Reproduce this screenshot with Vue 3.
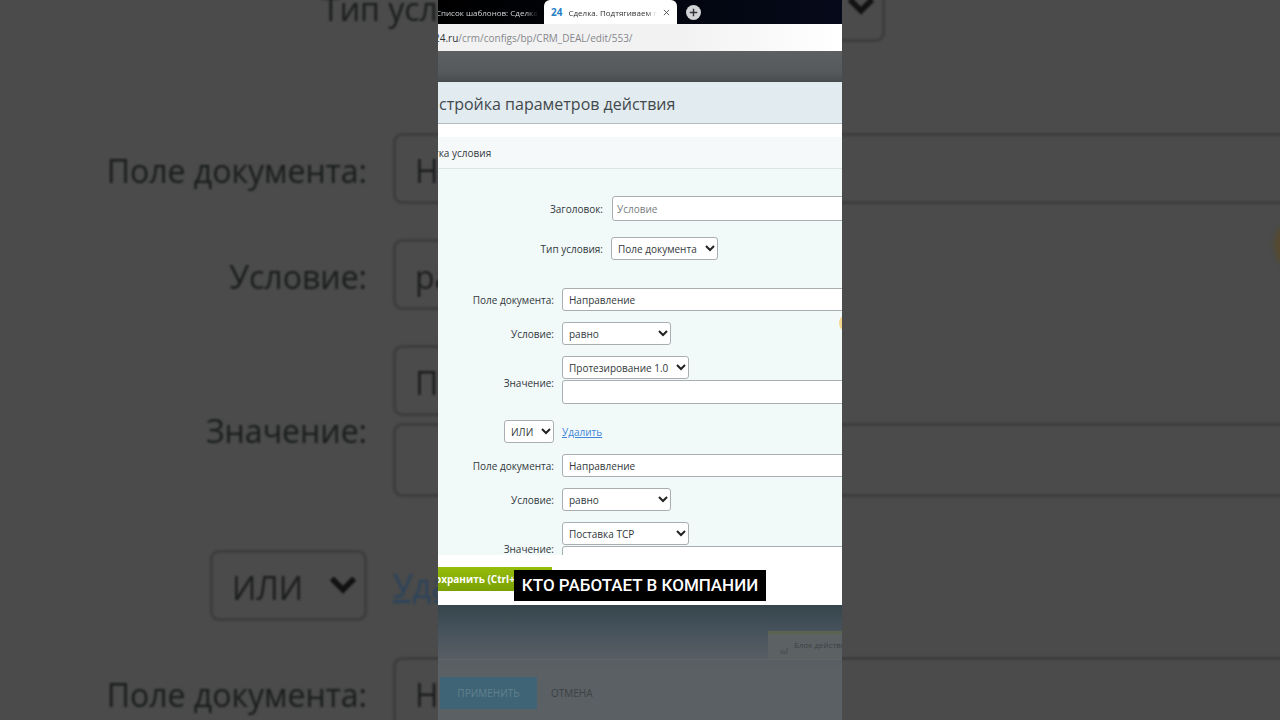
<script setup>
import { ref } from 'vue'

const title = ref('Условие')
const kind = ref('Поле документа')

const makeGroups = () => [
  { field: 'Направление', operator: 'равно', value: 'Протезирование 1.0', text: '', join: 'ИЛИ' },
  { field: 'Направление', operator: 'равно', value: 'Поставка TCP', text: '', join: '' }
]

const layers = ref([
  { id: 'back', groups: makeGroups() },
  { id: 'front', groups: makeGroups() }
])
</script>

<template>
  <div class="stage">
    <section
      v-for="layer in layers"
      :key="layer.id"
      :class="['layer', layer.id]"
      :inert="layer.id === 'back'"
    >
      <template v-if="layer.id === 'front'">
        <nav class="tabs">
          <a class="tab" href="#list">Список шаблонов: Сделка</a>
          <div class="tab active">
            <b>24</b>
            <a href="#deal">Сделка. Подтягиваем п</a>
            <button class="close" type="button" aria-label="Закрыть вкладку">
              <svg viewBox="0 0 8 8"><path d="M1 1l6 6M7 1L1 7" /></svg>
            </button>
          </div>
          <button class="add" type="button" aria-label="Новая вкладка">
            <svg viewBox="0 0 16 16"><circle cx="8" cy="8" r="8" /><path d="M8 4v8M4 8h8" /></svg>
          </button>
        </nav>
        <div class="address"><span><b>24.ru</b>/crm/configs/bp/CRM_DEAL/edit/553/</span></div>
        <div class="shade"></div>
        <header class="heading"><h1>стройка параметров действия</h1></header>
        <div class="section"><h2>тка условия</h2></div>
      </template>

      <form class="form" @submit.prevent>
        <div v-if="layer.id === 'front'" class="row top title-row">
          <label for="title">Заголовок:</label>
          <input id="title" v-model="title" class="box wide" type="text" />
        </div>
        <div class="row top kind-row">
          <label :for="layer.id + '-kind'">Тип условия:</label>
          <span class="pick kind">
            <select :id="layer.id + '-kind'" v-model="kind" class="box"><option>Поле документа</option></select>
            <svg viewBox="0 0 10 7"><path d="M1 1l4 4 4-4" /></svg>
          </span>
        </div>

        <div v-for="(g, i) in layer.groups" :key="i" class="group">
          <div class="row">
            <label :for="layer.id + '-field-' + i">Поле документа:</label>
            <select :id="layer.id + '-field-' + i" v-model="g.field" class="box wide"><option>{{ g.field }}</option></select>
          </div>
          <div class="row">
            <label :for="layer.id + '-op-' + i">Условие:</label>
            <span class="pick op">
              <select :id="layer.id + '-op-' + i" v-model="g.operator" class="box"><option>{{ g.operator }}</option></select>
              <svg viewBox="0 0 10 7"><path d="M1 1l4 4 4-4" /></svg>
            </span>
          </div>
          <div class="row">
            <label class="mid" :for="layer.id + '-value-' + i">Значение:</label>
            <div class="stack">
              <span class="pick value">
                <select :id="layer.id + '-value-' + i" v-model="g.value" class="box"><option>{{ g.value }}</option></select>
                <svg viewBox="0 0 10 7"><path d="M1 1l4 4 4-4" /></svg>
              </span>
              <input v-model="g.text" class="box wide tall" type="text" aria-label="Значение" />
            </div>
          </div>
          <div v-if="g.join" class="row join-row">
            <span class="pick join">
              <select v-model="g.join" class="box" aria-label="Связь условий"><option>{{ g.join }}</option></select>
              <svg viewBox="0 0 10 7"><path d="M1 1l4 4 4-4" /></svg>
            </span>
            <a class="remove" href="#remove">Удалить</a>
          </div>
        </div>
      </form>
      <i class="marker"></i>

      <template v-if="layer.id === 'front'">
        <footer class="actions"><button class="save" type="button">охранить (Ctrl+Enter)</button></footer>
        <div class="under">
          <div class="blocks">
            <svg viewBox="0 0 8 8"><path d="M1 4v3h6V2M3 5h2" /></svg>
            <span>Блок действий</span>
          </div>
          <div class="bottom">
            <button class="apply" type="button">ПРИМЕНИТЬ</button>
            <button class="cancel" type="button">ОТМЕНА</button>
          </div>
        </div>
      </template>
    </section>
    <div class="caption"><p>КТО РАБОТАЕТ В КОМПАНИИ</p></div>
  </div>
</template>

<style>
body {
  background: #4a4b4a;
  overflow: hidden;
}
</style>

<style scoped>
.stage {
  position: relative;
  display: grid;
  grid-template-columns: 1fr minmax(404px, 31.5%) 1fr;
  height: 100vh;
  overflow: hidden;
  font-family: "Open Sans", "Noto Sans", sans-serif;
}
.stage * {
  box-sizing: border-box;
}
.layer {
  position: relative;
  grid-row: 1;
  overflow: hidden;
  display: flex;
  flex-direction: column;
}
.front {
  grid-column: 2;
  --ctl: 23px;
  --tall: 24px;
  --gap: 11px;
  --stack: 1px;
  --label: 116px;
  --top-label: 165px;
  --space: 8px;
  --font: 10px;
  --drop: 1px;
  --line: 1px;
  --radius: 3px;
  --pad: 6px;
  --edge: #a9afb1;
  --fill: #ffffff;
  --ink: #33383b;
  --link: #3f86d8;
  --arrow: 10px;
  --arrow-right: 3px;
  --mark: #222222;
  background: #f1f9f9;
}
.back {
  grid-column: 1 / -1;
  --ctl: 71px;
  --tall: 74px;
  --gap: 35px;
  --stack: 7px;
  --label: 367px;
  --top-label: 522px;
  --space: 26px;
  --font: 32px;
  --drop: 4px;
  --line: 3px;
  --radius: 9px;
  --pad: 19px;
  --edge: #3c3d3c;
  --fill: #4c4b4b;
  --ink: #1a1c1d;
  --link: #2c435c;
  --arrow: 28px;
  --arrow-right: 10px;
  --mark: #111111;
  background: #4a4b4a;
}
.back .form {
  filter: blur(1px);
  margin-top: -29px;
}
.form {
  flex: 1;
  min-height: 0;
  overflow: hidden;
  font-size: var(--font);
  color: var(--ink);
}
.back .form {
  overflow: visible;
}
.front .form {
  padding-top: 27px;
}
.row {
  display: grid;
  grid-template-columns: var(--label) 1fr;
  column-gap: var(--space);
  align-items: center;
  margin-bottom: var(--gap);
}
.row.top {
  grid-template-columns: var(--top-label) 1fr;
}
.title-row {
  margin-bottom: 16px;
}
.title-row .box {
  height: 25px;
  padding-left: 4px;
  margin-left: 1px;
  color: #777c7f;
}
.front .kind-row {
  margin-bottom: 28px;
}
.back .kind-row {
  margin-bottom: 91px;
}
label {
  padding-top: var(--drop);
  text-align: right;
  white-space: nowrap;
}
.mid {
  padding-top: var(--pad);
}
.box {
  display: block;
  width: 100%;
  height: var(--ctl);
  margin: 0;
  padding: var(--line) 0 0 var(--pad);
  appearance: none;
  border: var(--line) solid var(--edge);
  border-radius: var(--radius);
  background: var(--fill);
  color: var(--ink);
  font: inherit;
  outline: none;
}
.wide {
  width: calc(100% + 12px);
}
.tall {
  height: var(--tall);
}
.stack {
  display: grid;
  row-gap: var(--stack);
}
.pick {
  position: relative;
  display: block;
}
.pick svg {
  position: absolute;
  right: var(--arrow-right);
  top: 0;
  width: var(--arrow);
  height: 100%;
  fill: none;
  stroke: var(--mark);
  stroke-width: 2;
  pointer-events: none;
}
.front .kind { width: 107px; }
.front .op { width: 109px; }
.front .value { width: 127px; }
.front .join { width: 50px; }
.back .kind { width: 337px; }
.back .op { width: 344px; }
.back .value { width: 400px; }
.back .join { width: 157px; }
.join {
  justify-self: end;
}
.front .join-row {
  margin: 16px 0 11px;
}
.back .join-row {
  margin: 53px 0 36px;
}
.remove {
  justify-self: start;
  color: var(--link);
  text-decoration: underline;
}
.marker {
  position: absolute;
  border-radius: 50%;
}
.front .marker {
  right: -11px;
  top: 315px;
  width: 14px;
  height: 16px;
  background: #f5d78e;
}
.back .marker {
  right: -36px;
  top: 220px;
  width: 42px;
  height: 50px;
  background: #554a30;
  filter: blur(2px);
}

.tabs {
  flex: none;
  display: flex;
  height: 24px;
  background: linear-gradient(90deg, #000000, #050a1a);
  font-size: 8px;
}
.tab {
  width: 106px;
  display: flex;
  align-items: center;
  overflow: hidden;
  white-space: nowrap;
  color: #d4d6da;
  text-decoration: none;
}
.tabs > a.tab {
  width: 102px;
  margin: 0 6px 0 -2px;
  mask-image: linear-gradient(90deg, #000000 88%, transparent);
}
.tab.active {
  width: 133px;
  padding: 0 7px;
  gap: 6px;
  border-radius: 6px 6px 0 0;
  background: #ffffff;
}
.active b {
  color: #2a7fc4;
  font-size: 10px;
}
.active a {
  flex: 1;
  overflow: hidden;
  color: #2f3235;
  text-decoration: none;
  mask-image: linear-gradient(90deg, #000000 88%, transparent);
}
button {
  border: 0;
  padding: 0;
  font: inherit;
}
.close,
.add {
  display: flex;
  align-items: center;
  background: none;
}
.close svg {
  width: 7px;
  height: 7px;
  fill: none;
  stroke: #44484b;
}
.add {
  margin-left: 9px;
}
.add svg {
  width: 15px;
  height: 15px;
  fill: #d3d4d6;
}
.add path {
  stroke: #303336;
  stroke-width: 1.5;
}
.address {
  flex: none;
  display: flex;
  align-items: center;
  height: 27px;
  background: linear-gradient(90deg, #f2f2f3 60%, #ffffff);
  color: #85888b;
  font-size: 10px;
}
.address span {
  margin-left: -4px;
  white-space: nowrap;
}
.address b {
  font-weight: 400;
  color: #2f3234;
}
.shade {
  flex: none;
  height: 31px;
  background: linear-gradient(#5c6063, #55595c 70%, #474b4e);
}
.heading {
  flex: none;
  display: flex;
  align-items: center;
  height: 42px;
  padding-top: 2px;
  border-bottom: 1px solid #b3bdc3;
  background: #e2ebef;
}
h1,
h2 {
  margin: 0;
  font-weight: 400;
  white-space: nowrap;
}
h1 {
  padding-left: 1px;
  font-size: 16px;
  color: #43494d;
}
.section {
  flex: none;
  display: flex;
  align-items: center;
  height: 45px;
  border-top: 13px solid #ffffff;
  border-bottom: 1px solid #dbe3e4;
  background: #f6f9fa;
}
h2 {
  margin-left: -4px;
  font-size: 10px;
  color: #34383a;
}
.actions {
  flex: none;
  height: 50px;
  padding-top: 12px;
  background: #ffffff;
}
.save {
  display: block;
  width: 114px;
  height: 24px;
  overflow: hidden;
  background: linear-gradient(#95bd0a, #7ba004);
  color: #ffffff;
  font-size: 10px;
  font-weight: 700;
  text-align: left;
  text-indent: -3px;
  white-space: nowrap;
}
.under {
  flex: none;
  height: 115px;
  display: flex;
  flex-direction: column;
  background: linear-gradient(#36444c, #46535c 22%, #555b62 42%, #5b6064 55%);
}
.blocks {
  align-self: flex-end;
  display: flex;
  align-items: center;
  gap: 6px;
  width: 74px;
  height: 28px;
  margin-top: 26px;
  padding: 0 0 5px 12px;
  overflow: hidden;
  border-top: 3px solid #5b6350;
  background: #5c6164;
  color: #3d4245;
  font-size: 8px;
  white-space: nowrap;
}
.blocks svg {
  flex: none;
  align-self: flex-end;
  width: 8px;
  height: 8px;
  fill: none;
  stroke: #454a4d;
}
.bottom {
  flex: 1;
  display: flex;
  align-items: flex-start;
  gap: 14px;
  padding: 17px 2px 0;
  border-top: 1px solid #616568;
}
.apply,
.cancel {
  height: 32px;
  font-size: 10px;
}
.apply {
  width: 97px;
  background: #3e6475;
  color: #62808d;
}
.cancel {
  background: none;
  color: #3d4245;
}
.caption {
  position: absolute;
  left: 0;
  right: 0;
  bottom: 119px;
  display: flex;
  justify-content: center;
}
.caption p {
  margin: 0;
  padding: 0 8px;
  background: #000000;
  color: #ffffff;
  font: 500 17px/31px Roboto, sans-serif;
}
</style>
